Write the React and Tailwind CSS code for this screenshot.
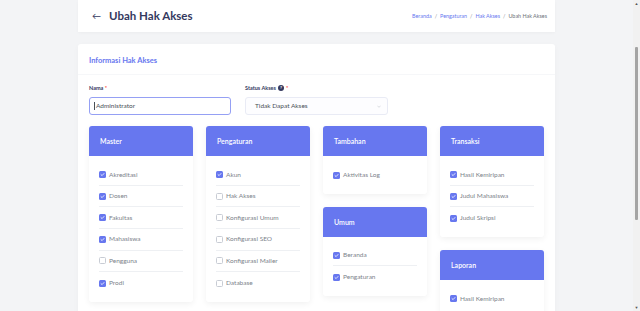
import React from 'react';

const groups = [
    [
        {
            title: 'Master',
            items: [
                ['Akreditasi', true],
                ['Dosen', true],
                ['Fakultas', true],
                ['Mahasiswa', true],
                ['Pengguna', false],
                ['Prodi', true],
            ],
        },
    ],
    [
        {
            title: 'Pengaturan',
            items: [
                ['Akun', true],
                ['Hak Akses', false],
                ['Konfigurasi Umum', false],
                ['Konfigurasi SEO', false],
                ['Konfigurasi Mailer', false],
                ['Database', false],
            ],
        },
    ],
    [
        { title: 'Tambahan', items: [['Aktivitas Log', true]] },
        { title: 'Umum', items: [['Beranda', true], ['Pengaturan', true]] },
    ],
    [
        {
            title: 'Transaksi',
            items: [
                ['Hasil Kemiripan', true],
                ['Judul Mahasiswa', true],
                ['Judul Skripsi', true],
            ],
        },
        { title: 'Laporan', items: [['Hasil Kemiripan', true]] },
    ],
];

function Check({ checked }) {
    if (checked) {
        return (
            <span className="w-[7px] h-[7px] rounded-[1.5px] bg-[#6777ef] flex items-center justify-center shrink-0">
                <svg width="5" height="5" viewBox="0 0 10 10">
                    <path d="M2 5.2 L4.2 7.2 L8 3" fill="none" stroke="white" strokeWidth="1.6" strokeLinecap="round" strokeLinejoin="round" />
                </svg>
            </span>
        );
    }
    return <span className="w-[7px] h-[7px] rounded-[1.5px] border border-[#c8ccd4] bg-white shrink-0" />;
}

function PermCard({ title, items }) {
    return (
        <div className="bg-white rounded-[3px] shadow-[0_2px_6px_rgba(0,0,0,0.06)]">
            <div className="h-[30px] bg-[#6777ef] rounded-t-[3px] flex items-center px-[11px] text-white text-[7px] font-semibold">
                {title}
            </div>
            <div className="px-[10px] pt-[8px] pb-[8px]">
                {items.map(([label, checked], i) => (
                    <div
                        key={label + i}
                        className={
                            'h-[21.6px] flex items-center gap-[3px] text-[6.5px] text-[#7d838b] ' +
                            (i < items.length - 1 ? 'border-b border-[#eef0f3]' : '')
                        }
                    >
                        <Check checked={checked} />
                        <span>{label}</span>
                    </div>
                ))}
            </div>
        </div>
    );
}

export default function App() {
    return (
        <div className="h-[311px] overflow-hidden flex bg-[#f3f4f6]" style={{ fontFamily: 'Lato, "Noto Sans", sans-serif' }}>
            <div className="flex-1">
                <div className="w-[477px] mx-auto">
                    {/* Header */}
                    <div className="h-[32px] bg-white flex items-center pl-[14px] pr-[8px] shadow-[0_1px_3px_rgba(0,0,0,0.03)]">
                        <span className="text-[#34395e] text-[9px] mr-[8px]">←</span>
                        <h1 className="text-[11.5px] font-bold text-[#34395e] leading-none">Ubah Hak Akses</h1>
                        <div className="ml-auto flex items-center gap-[3px] text-[5.4px]">
                            <span className="text-[#6777ef]">Beranda</span>
                            <span className="text-[#8b8f96]">/</span>
                            <span className="text-[#6777ef]">Pengaturan</span>
                            <span className="text-[#8b8f96]">/</span>
                            <span className="text-[#6777ef]">Hak Akses</span>
                            <span className="text-[#8b8f96]">/</span>
                            <span className="text-[#6c727a]">Ubah Hak Akses</span>
                        </div>
                    </div>

                    {/* Card */}
                    <div className="mt-[12px] bg-white rounded-[3px] shadow-[0_2px_6px_rgba(0,0,0,0.03)]">
                        <div className="h-[31px] flex items-center px-[11px] border-b border-[#f6f7f9]">
                            <span className="text-[7.5px] font-bold text-[#6777ef] mt-[4px]">Informasi Hak Akses</span>
                        </div>
                        <div className="px-[11px] pt-[9px]">
                            <div className="flex gap-[14px]">
                                <div className="w-[142px]">
                                    <div className="text-[5.5px] font-bold text-[#34395e] mb-[5px]">
                                        Nama <span className="text-[#fc544b]">*</span>
                                    </div>
                                    <div className="h-[18px] border border-[#95a0f4] rounded-[3px] flex items-center px-[4px] text-[6.5px] text-[#495057]">
                                        <span className="w-px h-[8px] bg-[#495057] mr-px" />
                                        Administrator
                                    </div>
                                </div>
                                <div className="w-[143px]">
                                    <div className="text-[5.5px] font-bold text-[#34395e] mb-[5px] flex items-center gap-[2px]">
                                        Status Akses
                                        <span className="w-[6px] h-[6px] rounded-full bg-[#34395e] text-white text-[4.5px] flex items-center justify-center">?</span>
                                        <span className="text-[#fc544b]">*</span>
                                    </div>
                                    <div className="h-[18px] border border-[#e9ebf5] bg-[#fdfdff] rounded-[3px] flex items-center pl-[9px] pr-[6px] text-[6.5px] text-[#495057]">
                                        Tidak Dapat Akses
                                        <svg className="ml-auto" width="4" height="3" viewBox="0 0 10 6">
                                            <path d="M1 1 L5 5 L9 1" fill="none" stroke="#c4c8cf" strokeWidth="1.5" />
                                        </svg>
                                    </div>
                                </div>
                            </div>

                            <div className="grid grid-cols-4 gap-[13px] mt-[11px] pb-[20px]">
                                {groups.map((col, ci) => (
                                    <div key={ci} className="flex flex-col gap-[13px]">
                                        {col.map((g) => (
                                            <PermCard key={g.title} title={g.title} items={g.items} />
                                        ))}
                                    </div>
                                ))}
                            </div>
                        </div>
                    </div>
                </div>
            </div>

            {/* Scrollbar */}
            <div className="w-[7px] bg-[#f1f1f1] relative">
                <div className="absolute left-0 top-0 w-full h-[7px] flex items-center justify-center text-[#555] text-[4px]">▲</div>
                <div className="absolute left-[2px] top-[47px] w-[3px] h-[173px] rounded-[1px] bg-[#a4a4a4]" />
                <div className="absolute left-0 bottom-0 w-full h-[7px] flex items-center justify-center text-[#555] text-[4px]">▼</div>
            </div>
        </div>
    );
}
